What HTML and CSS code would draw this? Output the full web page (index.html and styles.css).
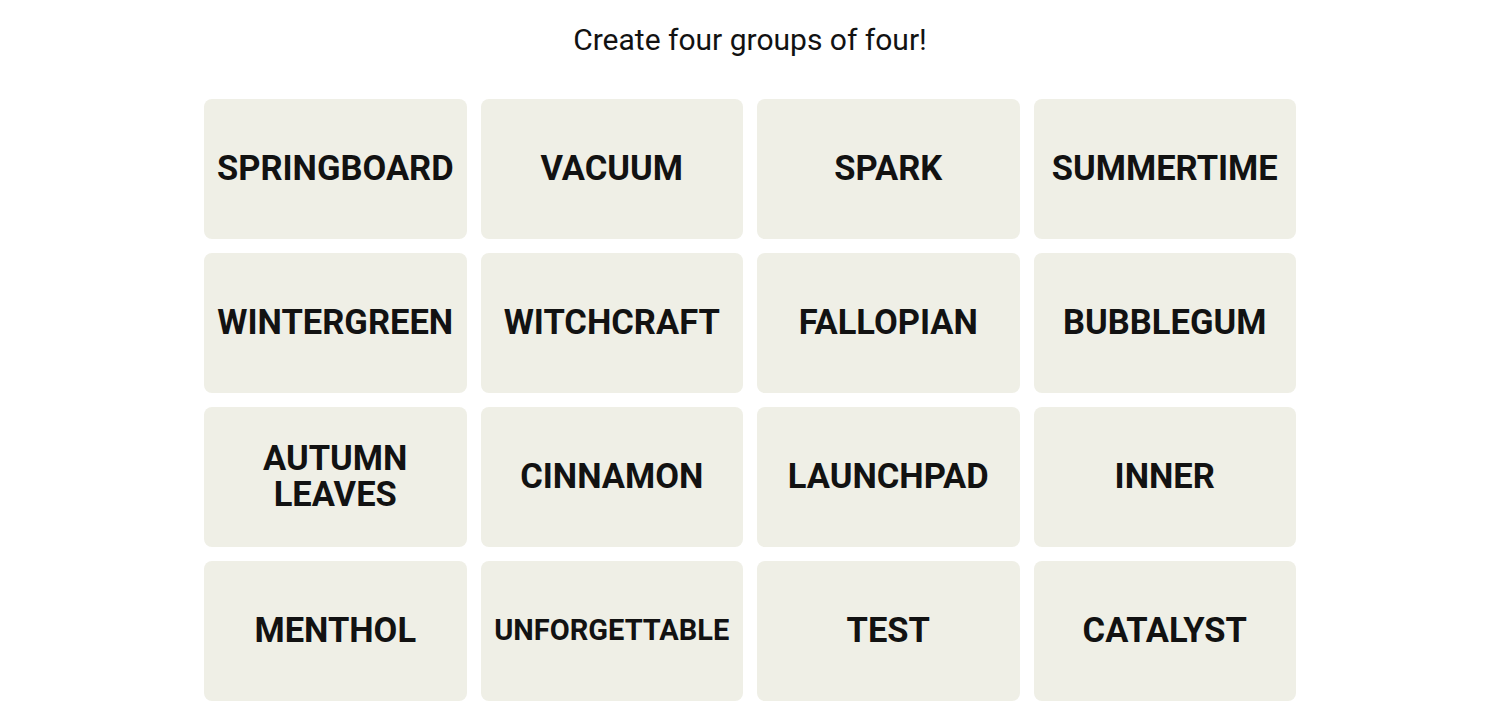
FILE: index.html
```html
<!DOCTYPE html>
<html lang="en">
<head>
  <meta charset="UTF-8">
  <meta name="viewport" content="width=device-width, initial-scale=1.0">
  <title>Connections</title>
  <link rel="stylesheet" href="styles.css">
</head>
<body>
  <main class="game">
    <p class="prompt">Create four groups of four!</p>

    <div class="board">
      <button class="tile">SPRINGBOARD</button>
      <button class="tile">VACUUM</button>
      <button class="tile">SPARK</button>
      <button class="tile">SUMMERTIME</button>

      <button class="tile">WINTERGREEN</button>
      <button class="tile">WITCHCRAFT</button>
      <button class="tile">FALLOPIAN</button>
      <button class="tile">BUBBLEGUM</button>

      <button class="tile">AUTUMN LEAVES</button>
      <button class="tile">CINNAMON</button>
      <button class="tile">LAUNCHPAD</button>
      <button class="tile">INNER</button>

      <button class="tile">MENTHOL</button>
      <button class="tile small">UNFORGETTABLE</button>
      <button class="tile">TEST</button>
      <button class="tile">CATALYST</button>
    </div>
  </main>
</body>
</html>
```

FILE: styles.css
```css
* { box-sizing: border-box; }
body { margin: 0; padding: 0; background: #fff; color: #121212; font-family: Roboto, 'Liberation Sans', Arial, sans-serif; }

.game { width: 1092px; margin: 0 auto; }

.prompt {
  margin: 0;
  padding-top: 20px;
  height: 99px;
  text-align: center;
  font-size: 30px;
  font-weight: 400;
  line-height: 40px;
}

.board {
  display: grid;
  grid-template-columns: repeat(4, 1fr);
  grid-auto-rows: 140px;
  gap: 14px;
}

.tile {
  display: flex;
  align-items: center;
  justify-content: center;
  padding: 0 10px 2px;
  border: none;
  border-radius: 8px;
  background: #efefe6;
  color: #121212;
  font-family: inherit;
  font-size: 34.5px;
  font-weight: 700;
  line-height: 36px;
  text-align: center;
  cursor: pointer;
}

.tile.small { font-size: 29px; }
```
